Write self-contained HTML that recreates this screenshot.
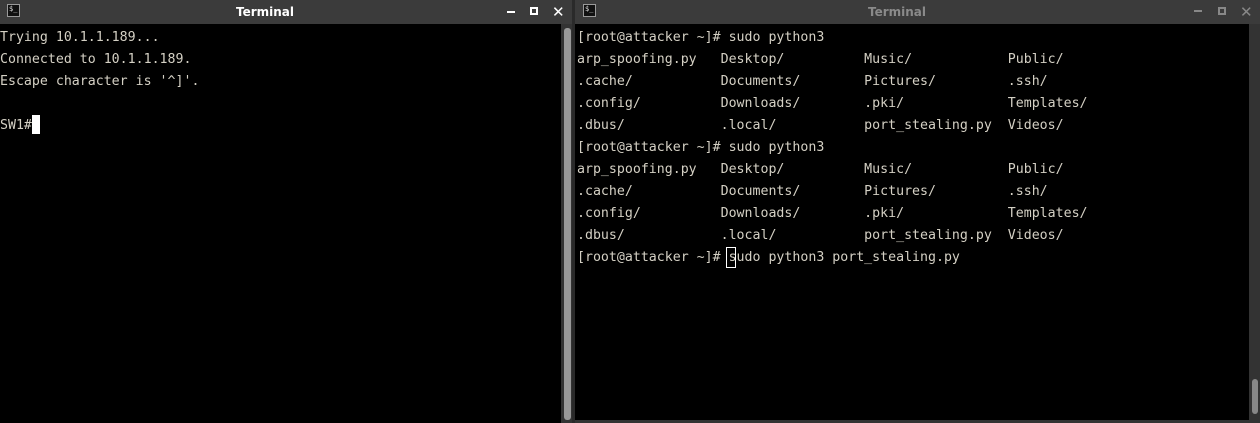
<!DOCTYPE html><html><head><style>
body{margin:0;width:1260px;height:423px;background:#000;position:relative;overflow:hidden;font-family:"DejaVu Sans Mono",monospace}
.tb{position:absolute;top:0;height:24px;background:#3b3b3b}
.t{position:absolute;top:5px;font:bold 12px "DejaVu Sans","Liberation Sans",sans-serif}
.ic{position:absolute;top:4px;width:13px;height:13px;border:1px solid #9a9a9a;background:#111;color:#ddd;font-size:7px;line-height:8px;box-sizing:border-box;padding-left:1px}
pre{position:absolute;margin:0;font-size:13.26px;line-height:22px;color:#d4d0c4;font-family:"DejaVu Sans Mono","Liberation Mono",monospace}
.btn{position:absolute;top:5px;font:bold 12px "DejaVu Sans",sans-serif}
</style></head><body>
<div class="tb" style="left:0;width:572px"></div>
<div class="ic" style="left:7px"><span>$_</span></div>
<div class="t" style="left:236px;color:#fff">Terminal</div>
<div style="position:absolute;left:507px;top:11px;width:8px;height:2px;background:#fff"></div>
<div style="position:absolute;left:530px;top:7px;width:8px;height:8px;border:2px solid #fff;box-sizing:border-box"></div>
<div class="btn" style="left:552px;top:3px;color:#fff;font-size:15px">✕</div>
<div style="position:absolute;left:572px;top:0;width:3px;height:423px;background:#2a2a2a"></div>
<div class="tb" style="left:575px;width:685px"></div>
<div class="ic" style="left:583px"><span>$_</span></div>
<div class="t" style="left:868px;color:#8a8a8a">Terminal</div>
<div style="position:absolute;left:1194px;top:10px;width:8px;height:2px;background:#888"></div>
<div style="position:absolute;left:1218px;top:7px;width:8px;height:8px;border:2px solid #888;box-sizing:border-box"></div>
<div class="btn" style="left:1240px;top:3px;color:#888;font-size:15px">✕</div>
<div style="position:absolute;left:561px;top:24px;width:11px;height:399px;background:#333"></div>
<div style="position:absolute;left:564px;top:28px;width:7px;height:392px;background:#999;border-radius:3px"></div>
<div style="position:absolute;left:1249px;top:24px;width:11px;height:399px;background:#333"></div>
<div style="position:absolute;left:1252px;top:379px;width:6px;height:35px;background:#888;border-radius:3px"></div>
<div style="position:absolute;left:575px;top:420px;width:674px;height:3px;background:#333"></div>
<pre style="left:0;top:27px">Trying 10.1.1.189...
Connected to 10.1.1.189.
Escape character is '^]'.

SW1#</pre>
<div style="position:absolute;left:32px;top:115px;width:8px;height:19px;background:#fff"></div>
<pre style="left:577px;top:27px">[root@attacker ~]# sudo python3
arp_spoofing.py   Desktop/          Music/            Public/
.cache/           Documents/        Pictures/         .ssh/
.config/          Downloads/        .pki/             Templates/
.dbus/            .local/           port_stealing.py  Videos/
[root@attacker ~]# sudo python3
arp_spoofing.py   Desktop/          Music/            Public/
.cache/           Documents/        Pictures/         .ssh/
.config/          Downloads/        .pki/             Templates/
.dbus/            .local/           port_stealing.py  Videos/
[root@attacker ~]# sudo python3 port_stealing.py</pre>
<div style="position:absolute;left:726px;top:247px;width:10px;height:21px;border:1px solid #fff;box-sizing:border-box"></div>
</body></html>
